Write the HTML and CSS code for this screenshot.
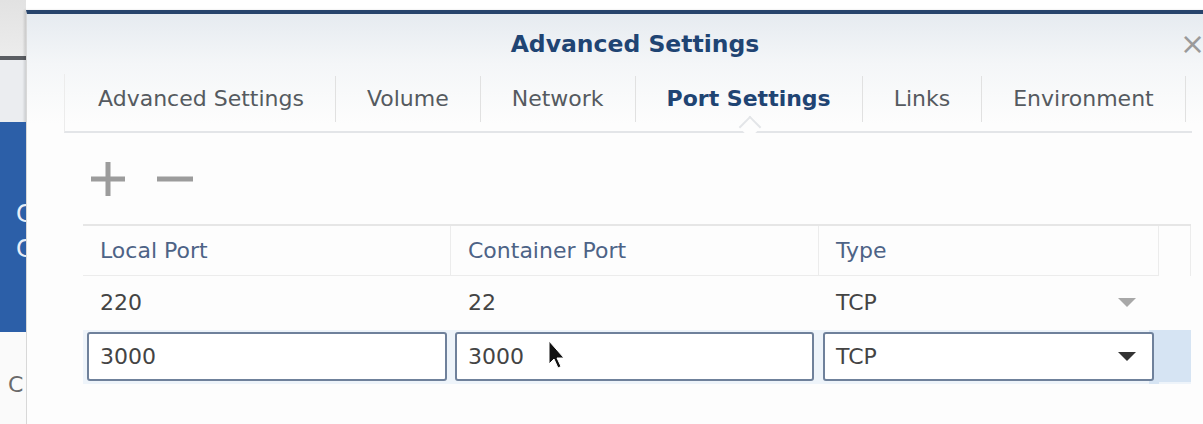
FILE: index.html
```html
<!DOCTYPE html>
<html>
<head>
<meta charset="utf-8">
<link rel="stylesheet" href="styles.css">
</head>
<body>
<div class="screen">
  <div class="desk">
    <div class="desk-top"></div>
    <div class="desk-bar"></div>
    <div class="desk-gray"></div>
    <div class="desk-blue"><span class="desk-c1">C</span><span class="desk-c2">C</span></div>
    <div class="desk-white"><span class="desk-c3">C</span></div>
  </div>
  <div class="dialog">
    <div class="titlebar">
      <span class="title">Advanced Settings</span>
      <span class="close">×</span>
    </div>
    <div class="tabs">
      <div class="tab">Advanced Settings</div>
      <div class="tab">Volume</div>
      <div class="tab">Network</div>
      <div class="tab active">Port Settings</div>
      <div class="tab">Links</div>
      <div class="tab">Environment</div>
      <div class="tab tab-end"></div>
    </div>
    <div class="toolbar">
      <svg class="tool" width="38" height="38" viewBox="0 0 38 38"><path d="M19 2V36M2 19H36" stroke="#9c9c9c" stroke-width="5" fill="none"/></svg>
      <svg class="tool" width="38" height="38" viewBox="0 0 38 38"><path d="M1 19H37" stroke="#9c9c9c" stroke-width="5" fill="none"/></svg>
    </div>
    <div class="grid">
      <div class="row head">
        <div class="cell c1">Local Port</div>
        <div class="cell c2">Container Port</div>
        <div class="cell c3">Type</div>
        <div class="cell c4"></div>
      </div>
      <div class="row data">
        <div class="cell c1">220</div>
        <div class="cell c2">22</div>
        <div class="cell c3 sel">TCP<svg class="caret light" width="18" height="10" viewBox="0 0 18 10"><path d="M0 0H18L9 9Z" fill="#a8a8a8"/></svg></div>
        <div class="cell c4"></div>
      </div>
      <div class="row edit">
        <div class="cell c1"><div class="field">3000</div></div>
        <div class="cell c2"><div class="field">3000</div></div>
        <div class="cell c3"><div class="field sel">TCP<svg class="caret" width="18" height="10" viewBox="0 0 18 10"><path d="M0 0H18L9 9Z" fill="#333"/></svg></div></div>
        <div class="cell c4"></div>
      </div>
      <svg class="cursor" width="20" height="30" viewBox="0 0 20 30"><path d="M2 1V24L7 19L11 28L14 26.5L10 18H17Z" fill="#111" stroke="#fff" stroke-width="1"/></svg>
    </div>
  </div>
</div>
</body>
</html>
```
FILE: styles.css
```css
html, body {
  margin: 0;
  padding: 0;
}
body {
  width: 1203px;
  height: 424px;
  overflow: hidden;
  background: #ffffff;
  font-family: "DejaVu Sans", Verdana, sans-serif;
}
.screen {
  display: flex;
  width: 1203px;
  height: 424px;
  overflow: hidden;
}
.desk {
  width: 26px;
  flex: none;
  display: flex;
  flex-direction: column;
  overflow: hidden;
}
.desk-top {
  height: 56px;
  background: linear-gradient(#e2e2e2, #ececec);
}
.desk-bar {
  height: 4px;
  background: #5a5d62;
}
.desk-gray {
  height: 62px;
  background: #ebedf0;
}
.desk-blue {
  height: 210px;
  background: #2c5fa8;
  position: relative;
  color: #e8eef8;
  font-size: 24px;
}
.desk-white {
  flex: 1;
  background: #fafafa;
  position: relative;
  color: #6a6a6a;
  font-size: 22px;
}
.desk-c1, .desk-c2, .desk-c3 {
  position: absolute;
  line-height: 1;
}
.desk-c1 { left: 16px; top: 80px; }
.desk-c2 { left: 16px; top: 115px; }
.desk-c3 { left: 8px; top: 42px; }

.dialog {
  flex: none;
  width: 1220px;
  margin-top: 10px;
  border-top: 4px solid #27446c;
  background: linear-gradient(#e6ebf0 0px, #f4f6f8 50px, #fdfdfd 110px, #fdfdfd);
  box-shadow: -2px 0 2px rgba(0,0,0,0.12);
  border-left: 1px solid #d8d8d8;
  display: flex;
  flex-direction: column;
}
.titlebar {
  height: 60px;
  position: relative;
  display: flex;
  justify-content: center;
  align-items: center;
}
.title {
  font-weight: bold;
  font-size: 23.5px;
  color: #1f4473;
  margin-left: -4px;
}
.close {
  position: absolute;
  left: 1153px;
  top: 15px;
  font-size: 30px;
  line-height: 1;
  color: #9a9a9a;
}
.tabs {
  margin-left: 37px;
  width: 1127px;
  height: 57px;
  display: flex;
  align-items: flex-start;
  border-bottom: 2px solid #e3e5e8;
  border-left: 1px solid #ececec;
  position: relative;
}
.tab {
  margin-top: 2px;
  height: 46px;
  line-height: 46px;
  padding: 0 31px;
  font-size: 22px;
  color: #555a60;
  border-right: 1px solid #e1e1e1;
  white-space: nowrap;
}
.tab:first-child {
  padding-left: 33px;
}
.tab-end {
  border-right: none;
  padding: 0;
}
.tab.active {
  font-weight: bold;
  font-size: 22px;
  color: #1f4473;
  position: relative;
}
.tab.active::after {
  content: "";
  position: absolute;
  left: 50%;
  bottom: -13px;
  width: 14px;
  height: 14px;
  margin-left: -7px;
  background: #fdfdfd;
  border-left: 2px solid #e3e5e8;
  border-top: 2px solid #e3e5e8;
  transform: rotate(45deg);
}
.toolbar {
  height: 91px;
  display: flex;
  align-items: center;
  padding-left: 62px;
  gap: 29px;
}
.tool {
  display: block;
}
.grid {
  margin-left: 56px;
  width: 1108px;
  border-top: 2px solid #e6e6e6;
  position: relative;
}
.row {
  display: flex;
}
.cell {
  box-sizing: border-box;
  font-size: 22px;
  display: flex;
  align-items: center;
  white-space: nowrap;
}
.c1 { width: 368px; }
.c2 { width: 368px; }
.c3 { width: 340px; }
.c4 { width: 32px; }
.head {
  height: 50px;
}
.head .cell {
  color: #4d6386;
  padding-left: 17px;
  border-right: 1px solid #ececec;
  border-bottom: 1px solid #ececec;
}
.head .c4 {
  border-bottom: none;
}
.data {
  height: 54px;
}
.data .cell {
  color: #444;
  padding-left: 17px;
  padding-bottom: 2px;
}
.sel {
  justify-content: space-between;
}
.data .c3 {
  padding-right: 23px;
}
.caret.light {
  margin-top: 2px;
}
.edit {
  height: 54px;
  background: #eef4fa;
}
.edit .cell {
  padding: 2px 4px 3px;
}
.edit .c1 { padding-left: 4px; padding-right: 4px; }
.edit .c2 { padding-left: 4px; padding-right: 5px; }
.edit .c3 { padding-left: 4px; padding-right: 5px; background: linear-gradient(90deg, transparent 330px, #d6e4f3 330px); }
.edit .c4 { background: #d6e4f3; padding: 0; height: 52px; }
.field {
  box-sizing: border-box;
  width: 100%;
  height: 49px;
  border: 2px solid #6f819b;
  border-radius: 3px;
  background: #ffffff;
  display: flex;
  align-items: center;
  padding-left: 11px;
  padding-right: 16px;
  color: #444;
  font-size: 22px;
}
.cursor {
  position: absolute;
  left: 464px;
  top: 114px;
}
```
